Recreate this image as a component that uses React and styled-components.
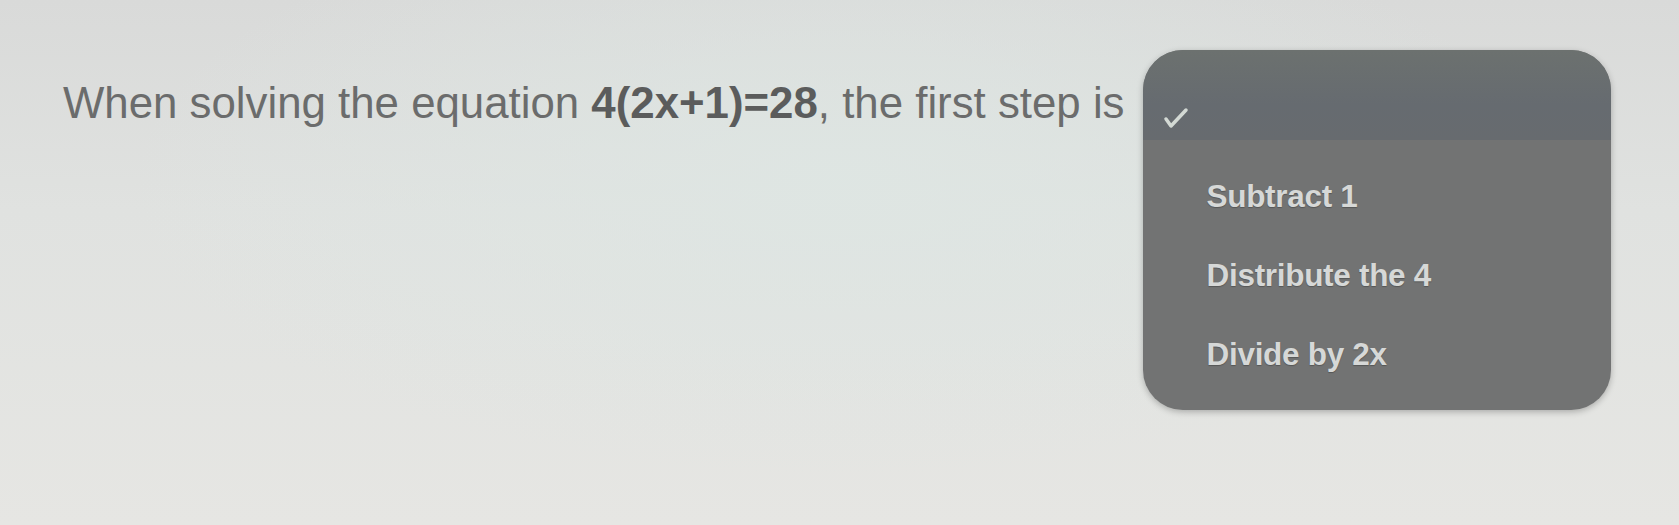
import React from "react"
import styled, { createGlobalStyle } from "styled-components"

const GlobalStyle = createGlobalStyle`
  html, body {
    margin: 0;
    padding: 0;
    height: 100%;
  }
  body {
    font-family: "Liberation Sans", Arial, sans-serif;
    background: #e0e2e0;
  }
`

const Page = styled.div`
  width: 1679px;
  height: 525px;
  box-sizing: border-box;
  padding: 50px 0 0 63px;
  display: flex;
  align-items: flex-start;
  gap: 18px;
  overflow: hidden;
  background:
    radial-gradient(ellipse at 50% 35%, rgba(222, 230, 227, 0.9) 0%, rgba(222, 230, 227, 0) 60%),
    linear-gradient(180deg, #d9dad9 0%, #e0e2e0 40%, #e6e6e3 100%);
`

const Question = styled.p`
  margin: 27px 0 0;
  font-size: 43.8px;
  line-height: 1.2;
  color: #6b6c6c;
  white-space: nowrap;
`

const MathExpr = styled.b`
  font-weight: bold;
  color: #5b5c5c;
`

const Menu = styled.div`
  width: 468px;
  height: 360px;
  box-sizing: border-box;
  border-radius: 40px;
  background: #727373;
  box-shadow: 0 2px 6px rgba(0, 0, 0, 0.25);
  overflow: hidden;
  padding-bottom: 16px;
  display: flex;
  flex-direction: column;
`

const SelectedRow = styled.div`
  height: 90px;
  flex-shrink: 0;
  margin-bottom: 17px;
  background: linear-gradient(180deg, #6c716f 0%, #666b70 60%, #676b6f 100%);
  display: flex;
  align-items: flex-end;
  padding: 0 0 11px 20px;
  box-sizing: border-box;
`

const Check = styled.svg`
  width: 26px;
  height: 22px;
`

const Option = styled.div`
  height: 79px;
  line-height: 79px;
  padding-left: 64px;
  font-size: 31.5px;
  font-weight: bold;
  letter-spacing: -0.3px;
  color: #d6d8d7;
  text-shadow: 0 1px 1px rgba(0, 0, 0, 0.25);
`

const options = ["Subtract 1", "Distribute the 4", "Divide by 2x"]

const App = () => {
  return (
    <Page>
      <GlobalStyle />
      <Question>
        When solving the equation <MathExpr>4(2x+1)=28</MathExpr>, the first step is
      </Question>
      <Menu>
        <SelectedRow>
          <Check viewBox="0 0 26 22">
            <path
              d="M3 12 L8 19 L23 3"
              fill="none"
              stroke="#d3d9d4"
              strokeWidth="3.5"
              strokeLinecap="round"
              strokeLinejoin="round"
            />
          </Check>
        </SelectedRow>
        {options.map((opt, id) => (
          <Option key={id}>{opt}</Option>
        ))}
      </Menu>
    </Page>
  )
}

export default App
